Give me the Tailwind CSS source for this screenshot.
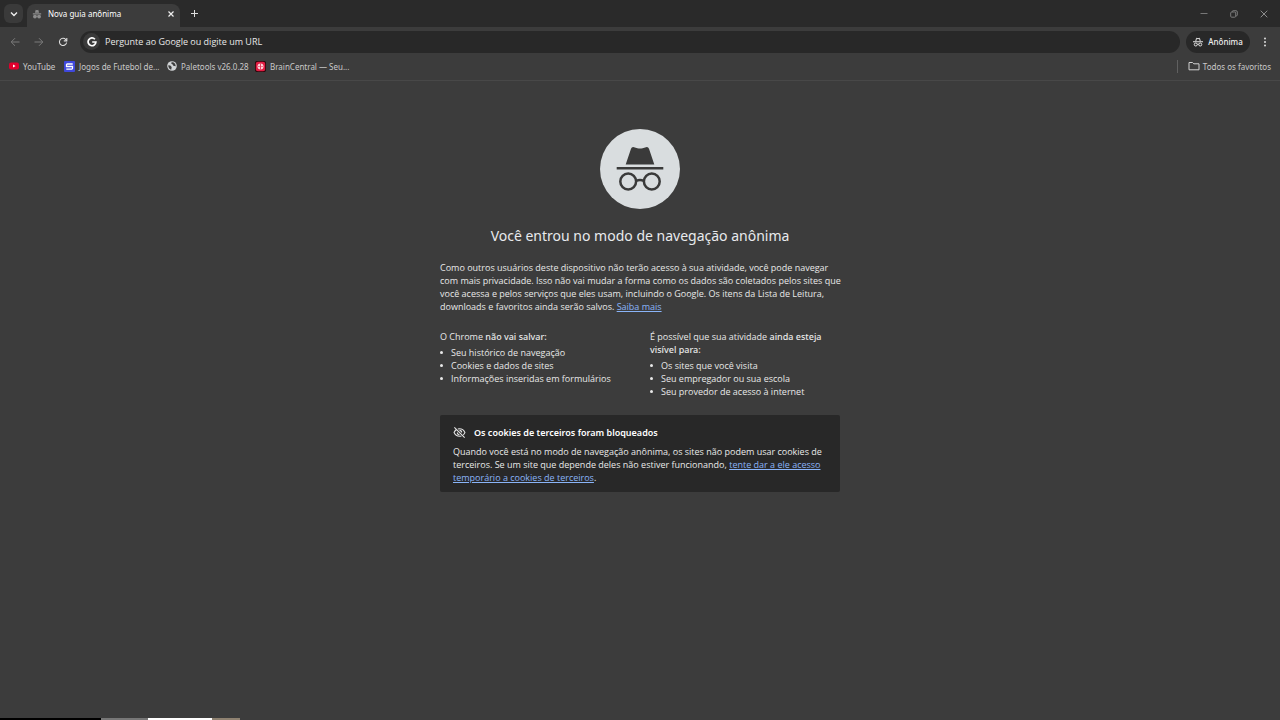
<!DOCTYPE html>
<html lang="pt-BR">
<head>
    <meta charset="UTF-8" />
    <meta name="viewport" content="width=device-width, initial-scale=1.0" />
    <title>Nova guia anônima</title>
    <script src="https://cdn.jsdelivr.net/npm/@tailwindcss/browser@4"></script>
</head>
<body class="bg-[#3c3c3c] min-h-screen flex flex-col text-[#e8e8e8] text-[9px] leading-[13px] font-['Noto_Sans',sans-serif]">
    <!-- Tab strip -->
    <header class="bg-[#2a2a2a] h-[27px] flex items-end">
        <button aria-label="Pesquisar guias" class="self-center ml-1 size-[19px] rounded-md bg-[#3a3a3a] flex items-center justify-center">
            <svg class="w-2 h-2" viewBox="0 0 8 8" fill="none" stroke="#eee" stroke-width="1.4"><path d="M1 2.500l3 3 3-3" /></svg>
        </button>
        <div class="ml-1 w-[153px] h-[23px] bg-[#3c3c3c] rounded-t-lg flex items-center px-[5px] pb-1">
            <svg class="size-[10px]" viewBox="0 0 24 24" fill="#8c8c8c"><path d="M7 9l2-7 3 1 3-1 2 7zM2 10h20v3H2z" /><circle cx="7" cy="18" r="4.500" /><circle cx="17" cy="18" r="4.500" /><path d="M10 16h4v2h-4z" /></svg>
            <span class="ml-[6px] text-[8px] text-white">Nova guia anônima</span>
            <button aria-label="Fechar guia" class="ml-auto">
                <svg class="size-[8px]" viewBox="0 0 8 8" stroke="#eee" stroke-width="1.2"><path d="M1.500 1.500l5 5M6.500 1.500l-5 5" /></svg>
            </button>
        </div>
        <button aria-label="Nova guia" class="self-center ml-[10px]">
            <svg class="size-[9px]" viewBox="0 0 9 9" stroke="#ddd"><path d="M4.500 1v7M1 4.500h7" /></svg>
        </button>
        <div class="self-center ml-auto mr-3 flex items-center gap-[22px]">
            <button aria-label="Minimizar"><svg class="size-[8px]" viewBox="0 0 8 8" stroke="#777"><path d="M.5 3.500h7" /></svg></button>
            <button aria-label="Restaurar"><svg class="size-[8px]" viewBox="0 0 8 8" fill="none" stroke="#858585" stroke-width=".9"><rect x=".7" y="2" width="5" height="5.200" rx="1" /><path d="M2.300 2V1.500q0-.8.8-.8H6q1.300 0 1.300 1.300v3q0 .8-.8.8H6" /></svg></button>
            <button aria-label="Fechar"><svg class="size-[8px]" viewBox="0 0 8 8" stroke="#999" stroke-width=".9"><path d="M.7.7l6.600 6.600M7.300.7L.7 7.300" /></svg></button>
        </div>
    </header>

    <!-- Toolbar -->
    <nav class="h-[29px] flex items-center pl-[10px] pr-[10px]">
        <div class="w-[70px] flex items-center gap-[14px]">
            <button aria-label="Voltar"><svg class="size-[10px]" viewBox="0 0 10 10" fill="none" stroke="#7b7b7b"><path d="M9.500 5H1.500M5 1.200L1.200 5 5 8.800" /></svg></button>
            <button aria-label="Avançar"><svg class="size-[10px]" viewBox="0 0 10 10" fill="none" stroke="#7b7b7b"><path d="M.5 5h8M5 1.200L8.800 5 5 8.800" /></svg></button>
            <button aria-label="Recarregar"><svg class="size-[10px]" viewBox="0 0 10 10" fill="none" stroke="#ddd" stroke-width="1.100"><path d="M8.600 5.500A3.600 3.600 0 1 1 7.800 2.600L8.800 3.800" /><path d="M8.800.9v3H5.800" /></svg></button>
        </div>
        <div class="flex-1 h-[22px] rounded-full bg-[#282828] flex items-center pl-[3px]">
            <span class="size-[17px] rounded-full bg-[#3a3a3a] flex items-center justify-center">
                <svg class="size-[10px]" viewBox="0 0 10 10" fill="none" stroke="#fff" stroke-width="1.700"><path d="M7.900 2.200A3.900 3.900 0 1 0 8.900 5H5.200" /></svg>
            </span>
            <input type="text" aria-label="Barra de endereço" placeholder="Pergunte ao Google ou digite um URL" class="ml-[5px] flex-1 bg-transparent outline-none font-['Open_Sans',sans-serif] placeholder:text-[#e8e8e8]" />
        </div>
        <button class="ml-[6px] h-[22px] w-16 rounded-full bg-[#282828] flex items-center justify-center gap-[5px] text-[8px] font-medium text-[#eee]">
            <svg class="size-[10px]" viewBox="0 0 20 20" fill="none" stroke="#e3e3e3" stroke-width="2"><path d="M5.500 8.500L7 2.500l3 1 3-1 1.500 6M0 9.500h20" /><circle cx="5.500" cy="15" r="3" /><circle cx="14.500" cy="15" r="3" /><path d="M8.500 14.500h3" /></svg>
            Anônima
        </button>
        <button aria-label="Menu" class="ml-[10px]"><svg class="size-[10px]" viewBox="0 0 10 10" fill="#ddd"><circle cx="5" cy="1.500" r="1" /><circle cx="5" cy="5" r="1" /><circle cx="5" cy="8.500" r="1" /></svg></button>
    </nav>

    <!-- Bookmarks -->
    <div class="h-[25px] border-b border-[#484848] flex items-center pl-[9px] pr-[9px] pb-1 text-[8px] text-[#c9c9c9] whitespace-nowrap">
        <a href="#" class="flex items-center gap-1 w-[55px]">
            <svg class="size-[10px] shrink-0" viewBox="0 0 10 10"><rect y="1.500" width="10" height="7" rx="2" fill="#e0002d" /><path d="M4 3.500v3L6.600 5z" fill="#fff" /></svg>
            YouTube
        </a>
        <a href="#" class="flex items-center gap-1 w-[103px]">
            <svg class="size-[11px] shrink-0" viewBox="0 0 11 11"><rect width="11" height="11" rx="1" fill="#3f48dc" /><path d="M8.700 3H3.200q-.7 0-.7.7V5.500h6V7.300q0 .8-.8.8H2.300" fill="none" stroke="#fff" stroke-width="1.300" /></svg>
            Jogos de Futebol de...
        </a>
        <a href="#" class="flex items-center gap-1 w-[88px]">
            <svg class="size-[10px] shrink-0" viewBox="0 0 10 10"><circle cx="5" cy="5" r="4.800" fill="#d0d3d5" /><path d="M1.300 4.200l2 .3 1.400 1.400-.5 2.900-1.500-.7Q1 6.700 1.300 4.200zM4.600 1.200l-.4 1.400 1.500.9.600 1.300 2.500.4Q8.700 2 6.200 1.200z" fill="#3c3c3c" /></svg>
            Paletools v26.0.28
        </a>
        <a href="#" class="flex items-center gap-1">
            <svg class="size-[11px] shrink-0" viewBox="0 0 11 11"><rect width="11" height="11" rx="2" fill="#250407" /><rect x=".8" y=".8" width="9.400" height="9.400" rx="2" fill="#e21d43" /><ellipse cx="5.500" cy="5.500" rx="3" ry="2.900" fill="#ffd5dc" /><path d="M5.500 2.500v6M3.300 5.500h1.300M6.400 5.500h1.300" fill="none" stroke="#e21d43" stroke-width=".8" /></svg>
            BrainCentral — Seu...
        </a>
        <a href="#" class="ml-auto border-l border-[#606060] pl-[10px] flex items-center gap-[3px]">
            <svg class="w-3 h-[10px]" viewBox="0 0 12 10" fill="none" stroke="#d0d0d0"><path d="M1 1.500h3.500l1.300 1.300H11v6H1z" /></svg>
            Todos os favoritos
        </a>
    </div>

    <main class="flex-1 w-[400px] max-w-full mx-auto pt-12 font-['Open_Sans',sans-serif]">
        <svg class="size-20 mx-auto" viewBox="0 0 80 80">
            <circle cx="40" cy="40" r="40" fill="#d9dddf" />
            <g fill="#3a3a3a">
                <path d="M25.700 35.500L31 19.800q.8-2.200 3-1.600l3.400 1q2.600.8 5.200 0l3.400-1q2.200-.6 3 1.600L54.300 35.500z" />
                <path d="M16.700 38h46.600v2.500H16.700z" />
            </g>
            <g fill="none" stroke="#3a3a3a" stroke-width="2.500"><circle cx="28.200" cy="52.500" r="7.900" /><circle cx="51.800" cy="52.500" r="7.900" /><path d="M36 52q4-2 8 0" /></g>
        </svg>
        <h1 class="mt-4 text-center text-[14px] leading-[22px] text-[#e8eaed] font-['Noto_Sans',sans-serif]">Você entrou no modo de navegação anônima</h1>
        <p class="mt-[14px] whitespace-nowrap">
            Como outros usuários deste dispositivo não terão acesso à sua atividade, você pode navegar<br />
            com mais privacidade. Isso não vai mudar a forma como os dados são coletados pelos sites que<br />
            você acessa e pelos serviços que eles usam, incluindo o Google. Os itens da Lista de Leitura,<br />
            downloads e favoritos ainda serão salvos. <a href="#" class="text-[#8ab4f8] underline">Saiba mais</a>
        </p>
        <div class="mt-[17px] grid grid-cols-2 gap-5 whitespace-nowrap">
            <div>
                <p>O Chrome <span class="font-medium font-['Noto_Sans',sans-serif]">não vai salvar:</span></p>
                <ul class="mt-[3px] [&>li]:flex [&>li]:items-center [&>li]:gap-2 [&>li]:before:size-[3px] [&>li]:before:rounded-full [&>li]:before:bg-[#e8e8e8]">
                    <li>Seu histórico de navegação</li>
                    <li>Cookies e dados de sites</li>
                    <li>Informações inseridas em formulários</li>
                </ul>
            </div>
            <div>
                <p>É possível que sua atividade <span class="font-medium font-['Noto_Sans',sans-serif]">ainda esteja<br />visível para:</span></p>
                <ul class="mt-[3px] [&>li]:flex [&>li]:items-center [&>li]:gap-2 [&>li]:before:size-[3px] [&>li]:before:rounded-full [&>li]:before:bg-[#e8e8e8]">
                    <li>Os sites que você visita</li>
                    <li>Seu empregador ou sua escola</li>
                    <li>Seu provedor de acesso à internet</li>
                </ul>
            </div>
        </div>
        <section class="mt-[17px] rounded-xs bg-[#282828] px-[13px] pt-[11px] pb-2 whitespace-nowrap">
            <h2 class="flex items-center gap-2 font-semibold text-white font-['Noto_Sans',sans-serif]">
                <svg class="size-[13px]" viewBox="0 0 24 24" fill="none" stroke="#e3e3e3" stroke-width="2"><path d="M9 5.400Q10.500 5 12 5q7 0 10 7-1 2.500-3 4.300M15.500 18.300Q14 19 12 19q-7 0-10-7 1.300-3 3.800-5M2.500 2.500l19 19M12 8a4 4 0 0 1 4 4M8 12a4 4 0 0 0 4 4" /></svg>
                Os cookies de terceiros foram bloqueados
            </h2>
            <p class="mt-[6px]">
                Quando você está no modo de navegação anônima, os sites não podem usar cookies de<br />
                terceiros. Se um site que depende deles não estiver funcionando, <a href="#" class="text-[#8ab4f8] underline">tente dar a ele acesso<br />temporário a cookies de terceiros</a>.
            </p>
        </section>
    </main>

    <!-- Edge of the window behind -->
    <footer class="h-[2px] flex">
        <div class="w-[101px] bg-black"></div>
        <div class="w-[47px] bg-[#777]"></div>
        <div class="w-16 bg-white"></div>
        <div class="w-7 bg-[#8f8271]"></div>
    </footer>
</body>
</html>
